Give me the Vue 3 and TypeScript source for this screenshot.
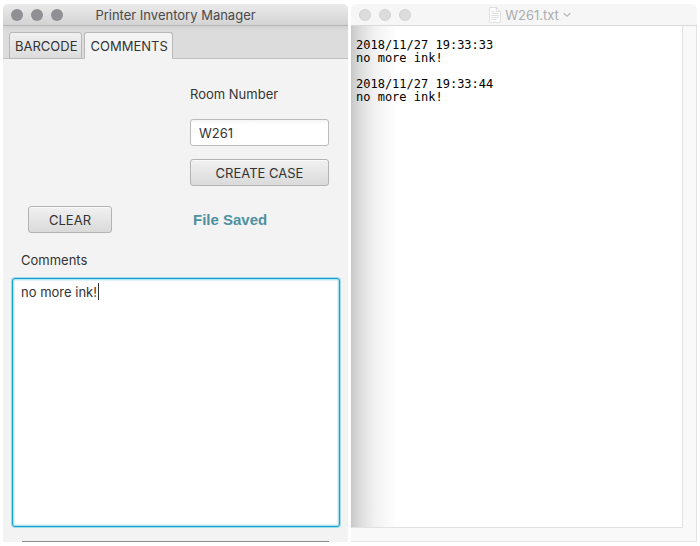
<script setup lang="ts">
import { ref } from 'vue'

const tabs = ['BARCODE', 'COMMENTS']
const activeTab = ref('COMMENTS')
const room = ref('W261')
const comments = ref('no more ink!')
const status = ref('File Saved')
const log = ref('2018/11/27 19:33:33\nno more ink!\n\n2018/11/27 19:33:44\nno more ink!')

function clearForm() {
  room.value = ''
  comments.value = ''
  status.value = ''
}

function createCase() {
  status.value = 'File Saved'
}
</script>

<template>
  <main class="desktop">
    <section class="window manager">
      <header class="titlebar">
        <div class="lights"><i></i><i></i><i></i></div>
        <h1 class="title">Printer Inventory Manager</h1>
      </header>
      <nav class="tabs" role="tablist">
        <button
          v-for="tab in tabs"
          :key="tab"
          class="tab"
          :class="{ active: tab === activeTab }"
          role="tab"
          type="button"
          :aria-selected="tab === activeTab"
          @click="activeTab = tab"
        >{{ tab }}</button>
      </nav>
      <div class="content">
        <div class="form">
          <label class="room-label" for="room">Room Number</label>
          <input id="room" v-model="room" class="room" type="text">
          <button class="button create" type="button" @click="createCase">CREATE CASE</button>
          <button class="button clear" type="button" @click="clearForm">CLEAR</button>
          <output class="status">{{ status }}</output>
        </div>
        <label class="comments-label" for="comments">Comments</label>
        <div class="comments-box">
          <textarea id="comments" v-model="comments" class="comments" spellcheck="false"></textarea>
          <span v-if="comments" class="caret"></span>
        </div>
        <div class="next-edge"></div>
      </div>
    </section>

    <section class="window editor">
      <header class="titlebar light">
        <div class="lights"><i></i><i></i><i></i></div>
        <h2 class="title">
          <svg class="doc" width="12" height="16" viewBox="0 0 12 16" fill="none" stroke="#e0e0e0" aria-hidden="true">
            <path d="M.5.5h7l4 4v11H.5z" fill="#fcfcfc" />
            <path d="M7.5.5v4h4M2.5 4.5h3M2.5 6.5h7M2.5 8.5h7M2.5 10.5h7M2.5 12.5h5" />
          </svg>
          <span>W261.txt</span>
          <svg class="chevron" width="8" height="6" viewBox="0 0 8 6" fill="none" stroke="#b8b8b8" stroke-width="1.3" aria-hidden="true">
            <path d="M.7 1.2 4 4.2l3.300-3" />
          </svg>
        </h2>
      </header>
      <div class="document">
        <textarea v-model="log" class="log" aria-label="W261.txt" spellcheck="false"></textarea>
      </div>
    </section>
  </main>
</template>

<style>
body {
  margin: 0;
  background: #fff;
}
</style>

<style scoped>
.desktop {
  box-sizing: border-box;
  display: grid;
  grid-template-columns: minmax(0, 345fr) minmax(0, 346fr);
  gap: 3px;
  height: 100vh;
  padding: 4px 3px;
  font-family: Inter, Roboto, "Liberation Sans", sans-serif;
  font-size: 13px;
  color: #333;
}

.window {
  display: flex;
  flex-direction: column;
  min-height: 0;
  overflow: hidden;
  border-radius: 5px 5px 0 0;
}

.manager {
  background: #f3f3f3;
}

.titlebar {
  box-sizing: border-box;
  display: grid;
  grid-template-columns: 54px 1fr 54px;
  align-items: center;
  flex: none;
  height: 22px;
  padding: 0 8px;
  background: linear-gradient(#ebebeb, #d3d3d3);
  border-bottom: 1px solid #b5b5b5;
}

.titlebar.light {
  background: #f6f6f6;
  border-bottom-color: #d9d9d9;
}

.lights {
  display: flex;
  gap: 8px;
}

.lights i {
  width: 12px;
  height: 12px;
  border-radius: 50%;
  background: #909094;
}

.light .lights i {
  box-sizing: border-box;
  background: #dcdcdc;
  border: 1px solid #d2d2d2;
}

.title {
  display: flex;
  align-items: center;
  justify-content: center;
  gap: 4px;
  margin: 0;
  font-size: 13px;
  line-height: 20px;
  font-weight: 400;
  color: #4a4a4a;
  white-space: nowrap;
}

.light .title {
  padding-left: 12px;
  color: #adadad;
}

.tabs {
  box-sizing: border-box;
  display: flex;
  align-items: flex-end;
  gap: 2px;
  flex: none;
  height: 33px;
  padding: 0 6px;
  background: linear-gradient(#d2d2d2, #dcdcdc 6px);
  box-shadow: inset 0 -1px #c0c0c0;
}

.tab {
  box-sizing: border-box;
  height: 27px;
  padding: 0 4px 0 5px;
  border: 1px solid #b8b8b8;
  border-radius: 3px 3px 0 0;
  background: linear-gradient(#f0f0f0, #dcdcdc);
  font: inherit;
  color: #333;
}

.tab.active {
  background: #f3f3f3;
  border-bottom-color: #f3f3f3;
}

.content {
  display: flex;
  flex-direction: column;
  flex: 1;
  min-height: 0;
  padding: 23px 8px 0;
}

.form {
  display: grid;
  grid-template-columns: 84px 139px;
  justify-content: space-between;
  row-gap: 13px;
  padding: 0 11px 0 17px;
}

.room-label {
  grid-column: 2;
  line-height: 24px;
}

.room {
  grid-column: 2;
  box-sizing: border-box;
  width: 100%;
  height: 27px;
  padding: 0 8px;
  border: 1px solid #bbb;
  border-radius: 3px;
  background: linear-gradient(#f4f4f4, #fff 4px);
  font: inherit;
  color: #333;
  outline: none;
}

.button {
  box-sizing: border-box;
  height: 27px;
  padding: 0;
  border: 1px solid #b3b3b3;
  border-radius: 3px;
  background: linear-gradient(#f1f1f1, #dadada);
  box-shadow: inset 0 1px #fafafa;
  font: inherit;
  color: #333;
}

.create {
  grid-column: 2;
}

.clear {
  grid-column: 1;
  margin-top: 7px;
}

.status {
  margin-top: 7px;
  padding-left: 3px;
  font-family: "Liberation Sans", Arial, sans-serif;
  font-size: 15px;
  line-height: 27px;
  font-weight: 700;
  color: #4f919f;
}

.comments-label {
  margin: 15px 0 6px;
  padding-left: 10px;
  line-height: 24px;
}

.comments-box {
  position: relative;
  display: flex;
  flex: 1;
  min-height: 0;
  margin-left: 1px;
}

.comments {
  box-sizing: border-box;
  flex: 1;
  width: 100%;
  padding: 4px 8px;
  border: 1px solid #139fd0;
  border-radius: 3px;
  box-shadow: 0 0 0 1px #a5dcec, inset 0 0 0 1px #b4e2ef, inset 0 0 0 2px #e3f4f9;
  background: #fff;
  font: inherit;
  line-height: 18px;
  color: #333;
  outline: none;
  resize: none;
}

.caret {
  position: absolute;
  top: 5px;
  left: 86px;
  width: 1px;
  height: 17px;
  background: #333;
}

.next-edge {
  flex: none;
  height: 1px;
  margin: 14px 11px 0;
  background: #8c8c8c;
}

.document {
  display: flex;
  flex: 1;
  min-height: 0;
  padding: 0 14px 14px 0;
  background: #f9f9f9;
  box-shadow: inset -1px -1px #e3e3e3;
}

.log {
  box-sizing: border-box;
  flex: 1;
  min-width: 0;
  padding: 13px 5px;
  border: 0;
  border-right: 1px solid #e2e2e2;
  border-bottom: 1px solid #e2e2e2;
  background: linear-gradient(90deg, #c8c8c8, #dedede 10px, #f2f2f2 24px, #fff 46px);
  font-family: "DejaVu Sans Mono", "Liberation Mono", monospace;
  font-size: 12px;
  line-height: 13px;
  color: #000;
  outline: none;
  resize: none;
}
</style>
